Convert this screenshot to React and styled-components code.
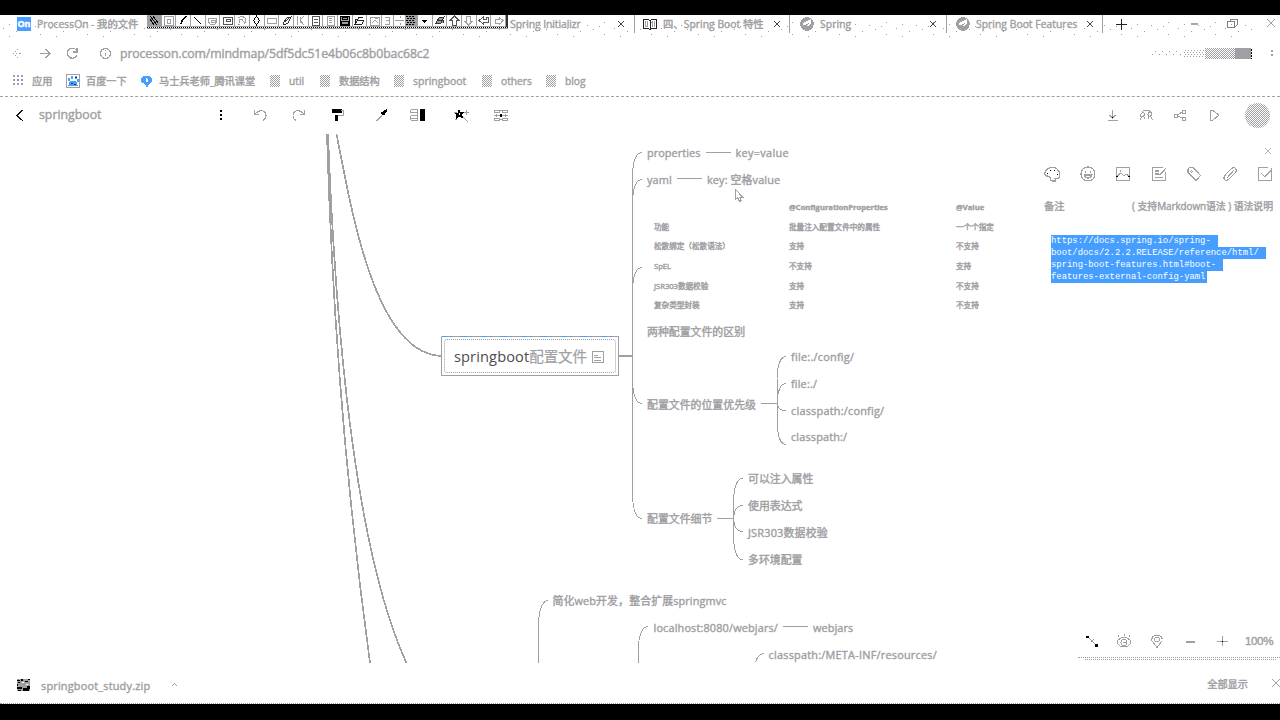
import React from 'react';
import styled, { createGlobalStyle } from 'styled-components';

const GRAY = '#a0a0a4';
const BLUE = '#469eff';
const INK = '#000';

const Global = createGlobalStyle`
  * { box-sizing: border-box; }
  body {
    margin: 0;
    width: 1280px;
    height: 720px;
    overflow: hidden;
    background: #fff;
    color: ${GRAY};
    font-family: "Open Sans", "Noto Sans CJK SC", sans-serif;
    -webkit-text-stroke: 0.4px currentColor;
  }
  svg { display: block; overflow: visible; }
`;

const Screen = styled.div`
  position: relative;
  display: flex;
  flex-direction: column;
  width: 1280px;
  height: 720px;
  overflow: hidden;
`;
const BlackBar = styled.div`
  flex: none;
  height: ${p => p.$h}px;
  background: #000;
`;

/* ---------- tab strip ---------- */
const TabStrip = styled.header`
  position: relative;
  display: flex;
  flex: none;
  height: 22px;
  padding-left: 11px;
`;
const Speckle = styled.svg`
  position: absolute;
  left: 0;
  top: 0;
  z-index: -1;
`;
const Tab = styled.div`
  display: flex;
  align-items: center;
  width: ${p => p.$w || 156}px;
  height: 18px;
  padding: 0 ${p => p.$end || 5}px 0 ${p => p.$pad || 6}px;
  border-right: 1px solid ${p => (p.$line ? GRAY : 'transparent')};
`;
const TabIcon = styled.span`
  flex: none;
  width: 14px;
  margin-right: 6px;
`;
const TabTitle = styled.span`
  flex: 1;
  overflow: hidden;
  font-size: 10.3px;
  line-height: 18px;
  letter-spacing: ${p => p.$ls || 0}px;
  white-space: pre;
`;
const WindowButtons = styled.div`
  display: flex;
  align-items: center;
  height: 16px;
  margin-left: auto;
  gap: 23px;
  padding-right: 1px;
`;
const NewTab = styled.div`
  display: flex;
  align-items: center;
  height: 18px;
  margin-left: 10px;
`;
const FloatingTools = styled.div`
  position: absolute;
  left: 147px;
  top: 0;
  display: flex;
  width: 361px;
  height: 13px;
  background: #fff;
  border-bottom: 1px dotted #000;
  border-right: 2px solid #333;
  box-shadow: 0 1px 0 ${GRAY};
`;
const ToolCell = styled.span`
  display: flex;
  flex: ${p => p.$w || 1};
  align-items: center;
  justify-content: center;
  height: 12px;
  border-right: 1px solid ${GRAY};
  border-bottom: 1px solid ${GRAY};
  background: ${p => (p.$on ? GRAY : 'transparent')};
`;

/* ---------- address + bookmarks ---------- */
const AddressBar = styled.div`
  display: flex;
  flex: none;
  align-items: center;
  height: 34px;
  padding: 0 1px 2px 10px;
`;
const Slot = styled.span`
  display: flex;
  flex: none;
  align-items: center;
  justify-content: center;
  width: 16px;
  height: 16px;
  margin-left: ${p => p.$gap || 0}px;
`;
const Url = styled.span`
  margin-left: 7px;
  font-size: 12.3px;
  letter-spacing: -0.12px;
`;
const Fade = styled.svg`
  margin-left: auto;
`;
const Bookmarks = styled.nav`
  display: flex;
  flex: none;
  align-items: center;
  height: 26px;
  padding: 0 0 5px 12px;
  border-bottom: 1px dashed ${GRAY};
`;
const Bookmark = styled.div`
  display: flex;
  align-items: center;
  width: ${p => p.$w}px;
  gap: ${p => p.$gap}px;
  font-size: ${p => p.$size || 10.2}px;
  line-height: 20px;
  white-space: nowrap;
`;
const FolderMark = styled.i`
  width: 10px;
  height: 12px;
  background: repeating-conic-gradient(${GRAY} 0 25%, #fff 0 50%) 0 0 / 2px 2px;
`;

/* ---------- editor ---------- */
const EditorBar = styled.div`
  display: flex;
  flex: none;
  align-items: center;
  height: 37px;
  padding: 0 10px 2px 12px;
`;
const DocTitle = styled.span`
  width: 101px;
  margin-left: 11px;
  font-size: 12.3px;
  line-height: 18px;
`;
const Avatar = styled.i`
  width: 25px;
  height: 25px;
  margin: 2px 0 0 23px;
  border-radius: 50%;
  background: repeating-conic-gradient(${GRAY} 0 25%, #fff 0 50%) 0 0 / 2px 2px;
`;
const BarRight = styled.div`
  display: flex;
  align-items: center;
  margin-left: auto;
`;
const Workspace = styled.main`
  display: flex;
  flex: none;
  height: 529px;
`;
const MindMap = styled.section`
  position: relative;
  width: 1040px;
  overflow: hidden;
`;
const Links = styled.svg`
  position: absolute;
  left: 0;
  top: 0;
`;
const Topic = styled.div`
  position: absolute;
  left: ${p => p.$x}px;
  top: ${p => p.$y - 134 - 8}px;
  font-size: 10.9px;
  line-height: 16px;
  letter-spacing: ${p => p.$ls}px;
  white-space: pre;
`;
const SelectedTopic = styled.div`
  position: absolute;
  left: 441px;
  top: 202px;
  width: 178px;
  height: 40px;
  padding: 2px;
  border: 1px solid ${GRAY};
  background:
    repeating-linear-gradient(90deg, ${BLUE} 0 6px, ${GRAY} 6px 9px, ${BLUE} 9px 11px, ${GRAY} 11px 20px) 0 0 / 100% 1px no-repeat border-box,
    #fff;
  border-top-color: transparent;
`;
const SelectedInner = styled.div`
  display: flex;
  align-items: center;
  height: 34px;
  padding-left: 9px;
  border: 1px dotted ${GRAY};
  border-radius: 3px;
  font-size: 14.6px;
  line-height: 20px;
  white-space: nowrap;
  -webkit-text-stroke: 0;
  b { font-weight: 400; color: #4c4c50; letter-spacing: 0.12px; }
  span { -webkit-text-stroke: 0.2px currentColor; letter-spacing: -0.2px; }
  svg { margin-left: 5px; }
`;
const CompareTable = styled.div`
  position: absolute;
  left: 654px;
  top: 63px;
  display: grid;
  grid-template-columns: 135px 167px 60px;
  grid-auto-rows: 19.7px;
  align-items: center;
  font-size: 7.6px;
  line-height: 12px;
  white-space: nowrap;
`;
const HeadCell = styled.b`
  font-size: 7.6px;
  font-weight: 700;
`;
const Pointer = styled.svg`
  position: absolute;
  left: 735px;
  top: 55px;
`;

/* ---------- side panel ---------- */
const Panel = styled.aside`
  display: flex;
  flex-direction: column;
  width: 240px;
`;
const PanelClose = styled.div`
  display: flex;
  justify-content: flex-end;
  padding: 11px 6px 0 0;
`;
const PanelTools = styled.div`
  display: flex;
  justify-content: space-between;
  padding: 9px 7px 0 4px;
`;
const NoteHead = styled.div`
  display: flex;
  justify-content: space-between;
  margin-top: 15px;
  padding: 0 7px 0 4px;
  font-size: 10.3px;
  line-height: 18px;
  white-space: nowrap;
`;
const NoteHint = styled.span`
  font-size: 9.9px;
  letter-spacing: -0.05px;
  i { font-style: normal; display: inline-block; width: 8px; text-align: center; }
`;
const NoteText = styled.div`
  display: flex;
  flex-direction: column;
  align-items: flex-start;
  margin: 20px 0 0 11px;
  color: #fff;
  font-family: "Liberation Mono", monospace;
  font-size: 8.9px;
  line-height: 12px;
`;
const NoteLine = styled.span`
  width: ${p => p.$w}px;
  height: 12px;
  background: ${BLUE};
  white-space: pre;
  -webkit-text-stroke: 0;
`;
const ZoomBar = styled.div`
  display: flex;
  align-items: center;
  height: 33px;
  margin-top: auto;
  padding-left: 44px;
`;
const ZoomValue = styled.span`
  margin-left: 15px;
  font-family: "Liberation Sans", sans-serif;
  font-size: 11.6px;
  letter-spacing: -0.4px;
`;
const ZoomEdge = styled.div`
  height: 6px;
  margin-left: 38px;
  border-top: 1px dotted ${GRAY};
  &::after {
    content: '';
    display: block;
    margin: 1px 4px 0 7px;
    border-top: 1px dotted ${GRAY};
  }
`;

/* ---------- downloads ---------- */
const Downloads = styled.footer`
  display: flex;
  flex: none;
  align-items: center;
  height: 41px;
  padding: 3px 0 0 15px;
  border-bottom: 1px dotted ${GRAY};
`;
const FileName = styled.span`
  width: 109px;
  margin: 1px 17px 0 10px;
  font-size: 10.9px;
  letter-spacing: 0.2px;
  white-space: nowrap;
`;
const ShowAll = styled.span`
  margin-left: auto;
  margin-top: -3px;
  font-size: 10.2px;
`;
const DismissSlot = styled(Slot)`
  margin: -3px -4px 0 20px;
`;

/* ---------- drawings ---------- */
const shapes = {
  close: <path d="M4 4l8 8M12 4l-8 8" />,
  smallX: <path d="M5 5l6 6M11 5l-6 6" strokeWidth="1.400" />,
  plus: <path d="M8.5 3v11M3 8.5h11" strokeWidth="1.400" />,
  plusThin: <><path d="M8.5 3v10M3 8.5h11" /><path d="M8 8h1v1H8z" fill={INK} stroke="none" /></>,
  minus: <path d="M4 8h8v1H4z" fill={GRAY} />,
  restore: <><path d="M3 5.500h7v7H3z" /><path d="M6 5V3.500h7v6l-2.500 2.500" /></>,
  backFaint: <path d="M3 8.500h1M6 8.500h1M9 8.500h2M5 6.500h1M5 10.500h1M7 4.500h1M7 12.500h1" />,
  forward: <path d="M3 8.500h10M8.500 4l4.500 4.500L8.500 13" />,
  reload: <path d="M12.500 5.500A5 5 0 1 0 13 10M13 3v4H9" strokeWidth="1.300" />,
  info: <><circle cx="8.500" cy="8.500" r="5" strokeWidth="1.300" /><path d="M8.500 7.500v3.500M8.500 5v1" strokeWidth="1.500" /></>,
  more: <path d="M7 3h2v2H7zM7 7h2v2H7zM7 11h2v2H7z" fill={INK} stroke="none" />,
  kebab: <path d="M8 5h2v2H8zM8 9h2v2H8z" fill={GRAY} stroke="none" />,
  chevronLeft: <path d="M11.500 2.500l-6.500 6 6.500 6" strokeWidth="1.200" />,
  undo: <path d="M3.500 3v4.500h4.500M4 7Q7 3.500 10.500 3.500Q14.500 4 15 8.500Q15 12 12 13.500" />,
  redo: <path d="M14.500 3v4.500H10M14 7Q11 3.500 7.500 3.500Q3.500 4 3 8.500Q3 12 6 13.500" />,
  roller: <><path d="M3 2h10v4H3z" fill={INK} stroke="none" /><path d="M12 3.500h2V8H9" stroke={GRAY} /><path d="M6 8h3v6H6z" fill={INK} stroke="none" /></>,
  pen: <><path d="M3.500 14L11 6" stroke={GRAY} strokeWidth="1.200" /><path d="M8 5h2V4l2-1 2-1v2l-2 2v2h-2L8 7z" fill={INK} stroke="none" /></>,
  style: <><path d="M2 2.500h7M1 5.500h8M2 8.500h7M1 11h8M2 13.500h7M1.500 3v3M1.500 9v4M8.500 3v10" /><path d="M11 2h5v12h-5z" fill={INK} stroke="none" /></>,
  wand: <><path d="M9 9l6 6" strokeWidth="1.200" /><path d="M6 1.500l1.500 3.500H12L9 7.500l1 4L6.500 9.500L3 12l.5-4L1 6h3.500z" fill={INK} stroke="none" /><path d="M13.500 2.500v5M11 5h5M1 5h3M2 12h2" /><path d="M6 6h1v2H6z" fill="#fff" stroke="none" /></>,
  layout: <><path d="M2 3.500h5v2H2zM10.500 3.500h5v2h-5zM2 11.500h5v2H2zM10.500 11.500h5v2h-5zM2 8.500h14M7 3.500h4M7 12.500h4M4 7v3M13 7v3" /><path d="M8 7h2v3H8z" fill={INK} stroke="none" /></>,
  download: <><path d="M8.500 3v8M5 8l3.500 3L12 8M3.500 13.500h10" strokeWidth="1.200" /><path d="M8 10h1v1H8z" fill={INK} stroke="none" /></>,
  people: <path d="M2 13l1.500-3M6 10l1 2M3 9.500Q2 7 4 6Q7 5 6.500 8Q6 10 3.500 9.500M4 5Q5 3 8 4Q11 3 13 5Q14 8 12 9.500Q9.500 9 10 7Q10.500 5 13 6M10 12l1-3M13 10l1.500 3" strokeWidth="1.200" />,
  share: <><path d="M6 7.500l5-3M6 9l5 2.500" /><rect x="2.500" y="7" width="3" height="3" /><rect x="10.500" y="3.500" width="3" height="3" /><rect x="10.500" y="10" width="3" height="3" /></>,
  play: <path d="M4.500 3v10.500h2l6.500-5.500-7-5z" />,
  palette: <><path d="M2 10Q-1 7 3 3.500Q8-1 13 3Q18 8 14.500 12.500H11L11.500 15H8.500Q6 15 6.500 12Q5.500 9.500 2 10z" strokeWidth="1.200" /><path d="M3 7.500h1M6 4.500h1M10 4.500h1M13 8.500h1" stroke={INK} /></>,
  smile: <><circle cx="8" cy="8" r="7" strokeWidth="1.200" /><path d="M5 6h1M10 6h1M4 9h8Q11 12 8 12Q5 12 4 9" strokeWidth="1.200" /></>,
  image: <><path d="M1.500 1.500h13v13h-13zM2 10l4-3 3 3 2-2 3 2M5 5h1" strokeWidth="1.200" /><path d="M1 10h2M13 10h2" stroke={INK} /></>,
  note: <path d="M12 1.500H1.500v13h13V6M4 5h4M4 8h4M4 11.500h8M7 8l2 1 6-7" strokeWidth="1.200" />,
  tag: <><path d="M2 3l1.500-1.500H7l7.500 8-4.500 5L2 6.500z" strokeWidth="1.200" /><circle cx="5.500" cy="5.500" r=".7" /></>,
  clip: <path d="M6 10l6-6M2 10l7-7Q12 0 14 3Q15 5 13 7l-6 6Q4 16 2 13Q1 11 4 9M5 12l6-6" strokeWidth="1.200" />,
  task: <path d="M11 1.500H1.500v13h13V2M4 7l4 4 7-8" strokeWidth="1.300" />,
  fit: <><path d="M4 4l9 9M7 9l3-3" /><path d="M2 3h3v2H2zM11 11h3v3h-3z" fill={INK} stroke="none" /></>,
  eye: <><path d="M1 9Q3 4.500 8 4.500Q13 4.500 15 9Q13 14 8 14Q3 14 1 9z" /><circle cx="8" cy="9.500" r="3" /><path d="M2 2l1 2M8 1v2M14 2l-1 2M7 9h3" /></>,
  pin: <><path d="M8 14.500L3 8Q2 2.500 8 2.500Q14 2.500 13 8z" /><circle cx="8" cy="6.500" r="2.500" /></>,
  up: <path d="M4.500 9.500l3-3 3 3" strokeWidth="1.200" />,
};

function Glyph({ name, size = 16, color = GRAY }) {
  return (
    <svg width={size} height={size} viewBox="0 0 16 16" fill="none" stroke={color} shapeRendering="crispEdges">
      {shapes[name]}
    </svg>
  );
}

const Leaf = () => (
  <svg width="14" height="14" viewBox="0 0 14 14" shapeRendering="crispEdges">
    <circle cx="7" cy="7" r="6.800" fill={GRAY} />
    <path d="M3 6q4-2 8-4q1 4-1 6q-2 2-6 1q4 0 5-3q-3 2-6 2z" fill="#fff" />
  </svg>
);
const Book = () => (
  <svg width="14" height="12" viewBox="0 0 14 12" fill="none" stroke="#222" shapeRendering="crispEdges">
    <path d="M.5 1.500h5l1.500 1 1.500-1h5v9H8.500L7 11.500 5.500 10.500h-5zM7 2v9" />
    <path d="M2.500 3v6M4.500 3v6M9.500 3v6M11.500 3v6" stroke={GRAY} />
  </svg>
);
const OnBadge = styled.span`
  display: block;
  width: 14px;
  height: 14px;
  background: ${BLUE};
  color: #fff;
  font-size: 9px;
  font-weight: 700;
  line-height: 14px;
  text-align: center;
`;
const AppsMark = () => (
  <svg width="12" height="12" fill={GRAY} shapeRendering="crispEdges">
    {[0, 4, 8].map(y => [0, 4, 8].map(x => (
      <rect key={`${x}${y}`} x={x + 1} y={y} width="2" height="2" fill={x === 4 && y === 4 ? BLUE : GRAY} />
    )))}
  </svg>
);
const PawMark = () => (
  <svg width="14" height="14" fill="none" stroke={GRAY} shapeRendering="crispEdges">
    <rect x=".5" y=".5" width="13" height="13" />
    <path d="M4 7h6l2 5H2zM2 4h2v3H2zM5 2h2v3H5zM9 2h2v3H9zM11 5h2v3h-2z" fill={BLUE} stroke="none" />
    <path d="M5 9h2M8 10h2M9 3h2" stroke="#333" />
  </svg>
);
const DropMark = () => (
  <svg width="12" height="13" shapeRendering="crispEdges">
    <path d="M2 1h7l2 3v3L8 9l-2 4-2-4-4-2V4z" fill={BLUE} />
    <path d="M5.500 3v3h1V4" stroke="#fff" fill="none" />
  </svg>
);
const ArchiveMark = () => (
  <svg width="16" height="14" shapeRendering="crispEdges">
    <path d="M2 1h13v12H2z" fill={GRAY} />
    <path d="M2 2h3v1H2zM6 1h2v2H6zM10 3h3v1h-3zM3 4h2v1H3zM13 1h2v1h-2zM2 6h1v2H2zM2 9h5v2H2zM8 10h6v3H8zM3 12h3v1H3zM12 8h3v3h-3z" fill="#000" />
    <path d="M7 4h2v1H7zM11 6h2v1h-2z" fill="#fff" />
  </svg>
);

const toolCells = [
  { on: true, d: 'M2 1l7 9M5 1l5 7M2 4l4 6', k: INK },
  { d: 'M1 1h9v9H1zM4 4h3v4H4z' },
  { d: 'M3 9l1-3 4-5', k: INK, w: 1.5 },
  { d: 'M2 2l7 7', k: INK },
  { d: 'M2 3h7l1 3-2 3H3L1 6zM4 5h4v2H4z' },
  { d: 'M1 2h9v7H1zM4 4h4v2H4z', k: '#555' },
  { d: 'M2 3q4-3 7 0v5M3 8V5l3-1 3 5M2 9h2' },
  { d: 'M5.500 1l3 4.500-3 4.500-3-4.500z', k: INK },
  { d: 'M1 3h9v5H1z' },
  { d: 'M2 8l4-5 4-1-3 6-4 2zM4 7l4-4', k: '#333' },
  { d: 'M2 1v9M9 1L5 5l4 5M5 2v6' },
  { d: 'M2 1h7v9H2zM4 4h4M4 7h4', k: '#555' },
  { d: 'M2 1h7v9H2zM4 3h3M4 5h3M4 7h3' },
  { d: 'M1 1h9v9H1zM3 2h5v2H3zM2 6h7v3H2z', k: INK, f: GRAY },
  { d: 'M1 9V4h3l1-2h4M1 9l3-4h6L8 9z', k: '#222' },
  { d: 'M1 2h9v8H1zM3 8l3-3 3 3M6 3h3' },
  { d: 'M3 2h4v7H3M4 5h3', wide: 0.8 },
  { d: 'M1 5.500h9M6 1v2M6 8v2', wide: 0.8 },
  { on: true, d: 'M0 1h2m1 0h2m1 0h2M1 3h2m1 0h2m1 0h2M0 5h2m1 0h2m1 0h2M1 7h2m1 0h2m1 0h2M0 9h2m1 0h2m1 0h2', k: INK, wide: 0.8 },
  { d: 'M3 5h5M4 6h3M5 7h1', k: INK },
  { d: 'M2 8l3-5 5-1-3 6zM3 5h6v3', k: '#333', f: GRAY },
  { d: 'M5.500 1L1.500 5h2v5h4V5h2z', k: '#555' },
  { d: 'M5.500 10L1.500 6h2V1h4v5h2z' },
  { d: 'M1 5.500L5 2v2h3V2h2v5H5v2z', k: '#555' },
  { d: 'M10 5.500L6 2v2H2v4h4v2z' },
];

const topics = [
  [647, 153, 'properties', 0.06], [735.5, 153, 'key=value', 0.33],
  [647, 180, 'yaml', 0.1], [707, 180, 'key: 空格value', 0.12],
  [647, 331.5, '两种配置文件的区别'],
  [647, 405, '配置文件的位置优先级'],
  [791, 357, 'file:./config/', 0.25], [791, 384, 'file:./', 0.15],
  [791, 411, 'classpath:/config/', 0.22], [791, 437, 'classpath:/', 0.15],
  [647, 519, '配置文件细节'],
  [748, 479, '可以注入属性'], [748, 506, '使用表达式'],
  [748, 533, 'JSR303数据校验', 0.2], [748, 560, '多环境配置'],
  [552.5, 601, '简化web开发，整合扩展springmvc', 0.12],
  [653.5, 628, 'localhost:8080/webjars/', 0.15], [813, 628, 'webjars', 0.1],
  [768.5, 655, 'classpath:/META-INF/resources/', 0.23],
];

const rows = [
  ['功能', '批量注入配置文件中的属性', '一个个指定'],
  ['松散绑定（松散语法）', '支持', '不支持'],
  ['SpEL', '不支持', '支持'],
  ['JSR303数据校验', '支持', '不支持'],
  ['复杂类型封装', '支持', '不支持'],
];

const noteLines = [
  [167, 'https://docs.spring.io/spring-'],
  [215, 'boot/docs/2.2.2.RELEASE/reference/html/'],
  [172, 'spring-boot-features.html#boot-'],
  [156, 'features-external-config-yaml'],
];

const branch = (x, y, tx, ty) => {
  const r = Math.min(22, Math.abs(ty - y));
  const s = ty < y ? 1 : -1;
  return `M${x} ${y}V${ty + s * r}Q${x + 1} ${ty} ${tx} ${ty}`;
};

export default function App() {
  return (
    <Screen>
      <Global />
      <BlackBar $h={15} />
      <TabStrip>
        <Speckle width="1280" height="22" fill={GRAY} shapeRendering="crispEdges">
          <defs>
            <pattern id="dots" width="47" height="12" patternUnits="userSpaceOnUse">
              <path d="M3 1h1v1h-1zM16 4h1v1h-1zM29 2h1v1h-1zM40 7h1v1h-1zM9 9h1v1h-1zM23 10h1v1h-1zM35 11h1v1h-1z" />
            </pattern>
          </defs>
          <rect x="2" y="5" width="1250" height="17" fill="url(#dots)" />
        </Speckle>
        <Tab><TabIcon><OnBadge>On</OnBadge></TabIcon><TabTitle>ProcessOn - 我的文件</TabTitle></Tab>
        <Tab />
        <Tab />
        <Tab $line>
          <TabIcon /><TabTitle $ls={-0.05}>{'  Spring Initializr'}</TabTitle><Glyph name="smallX" color="#444" />
        </Tab>
        <Tab $line $w={155} $pad={8} $end={4}>
          <TabIcon><Book /></TabIcon><TabTitle $ls={0.05}>四、Spring Boot 特性</TabTitle><Glyph name="smallX" color="#444" />
        </Tab>
        <Tab $line $w={157} $pad={10}>
          <TabIcon><Leaf /></TabIcon><TabTitle $ls={0.1}>Spring</TabTitle><Glyph name="smallX" color="#444" />
        </Tab>
        <Tab $line $pad={9} $end={4}>
          <TabIcon><Leaf /></TabIcon><TabTitle $ls={0.05}>Spring Boot Features</TabTitle><Glyph name="smallX" color="#444" />
        </Tab>
        <NewTab><Glyph name="plus" color="#222" /></NewTab>
        <WindowButtons>
          <Glyph name="minus" size={15} /><Glyph name="restore" size={15} color="#77777b" /><Glyph name="close" size={16} />
        </WindowButtons>
        <FloatingTools>
          {toolCells.map((c, i) => (
            <ToolCell key={i} $on={c.on} $w={c.wide}>
              <svg width="11" height="11" fill={c.f || 'none'} stroke={c.k || GRAY} strokeWidth={c.w || 1} shapeRendering="crispEdges">
                <path d={c.d} />
              </svg>
            </ToolCell>
          ))}
        </FloatingTools>
      </TabStrip>

      <AddressBar>
        <Slot><Glyph name="backFaint" /></Slot>
        <Slot $gap={11}><Glyph name="forward" /></Slot>
        <Slot $gap={11}><Glyph name="reload" /></Slot>
        <Slot $gap={17}><Glyph name="info" /></Slot>
        <Url>processon.com/mindmap/5df5dc51e4b06c8b0bac68c2</Url>
        <Fade width="101" height="11" shapeRendering="crispEdges">
          <defs>
            <pattern id="sparse" width="7" height="5" patternUnits="userSpaceOnUse"><path d="M1 1h1v1h-1zM4 3h1v1h-1z" fill={GRAY} /></pattern>
            <pattern id="mid" width="3" height="4" patternUnits="userSpaceOnUse"><path d="M0 0h1v1h-1zM1 2h1v1h-1z" fill={GRAY} /></pattern>
            <pattern id="dense" width="2" height="2" patternUnits="userSpaceOnUse"><path d="M0 0h1v1h-1zM1 1h1v1h-1z" fill={GRAY} /></pattern>
          </defs>
          <rect x="0" y="2" width="32" height="6" fill="url(#sparse)" />
          <rect x="32" y="1" width="22" height="9" fill="url(#mid)" />
          <rect x="54" y="0" width="30" height="11" fill="url(#dense)" />
          <rect x="84" y="0" width="16" height="11" fill={GRAY} />
          <path d="M100.500 1v10" stroke="#000" strokeDasharray="2 1" />
        </Fade>
        <Slot $gap={11}><Glyph name="kebab" /></Slot>
      </AddressBar>

      <Bookmarks>
        <Bookmark $w={54} $gap={8}><AppsMark />应用</Bookmark>
        <Bookmark $w={75} $gap={6}><PawMark />百度一下</Bookmark>
        <Bookmark $w={129} $gap={6}><DropMark />马士兵老师_腾讯课堂</Bookmark>
        <Bookmark $w={50} $gap={9}><FolderMark />util</Bookmark>
        <Bookmark $w={74} $gap={9}><FolderMark />数据结构</Bookmark>
        <Bookmark $w={88} $gap={9} $size={10.5}><FolderMark />springboot</Bookmark>
        <Bookmark $w={64} $gap={9}><FolderMark />others</Bookmark>
        <Bookmark $w={60} $gap={9}><FolderMark />blog</Bookmark>
      </Bookmarks>

      <EditorBar>
        <Slot><Glyph name="chevronLeft" color="#111" /></Slot>
        <DocTitle>springboot</DocTitle>
        <Slot $gap={73}><Glyph name="more" /></Slot>
        <Slot $gap={22}><Glyph name="undo" /></Slot>
        <Slot $gap={23}><Glyph name="redo" /></Slot>
        <Slot $gap={23}><Glyph name="roller" /></Slot>
        <Slot $gap={28}><Glyph name="pen" /></Slot>
        <Slot $gap={20}><Glyph name="style" /></Slot>
        <Slot $gap={28}><Glyph name="wand" /></Slot>
        <Slot $gap={23}><Glyph name="layout" /></Slot>
        <BarRight>
          <Slot><Glyph name="download" /></Slot>
          <Slot $gap={18}><Glyph name="people" /></Slot>
          <Slot $gap={18}><Glyph name="share" /></Slot>
          <Slot $gap={18}><Glyph name="play" /></Slot>
          <Avatar />
        </BarRight>
      </EditorBar>

      <Workspace>
        <MindMap>
          <Links width="1040" height="529" viewBox="0 134 1040 529" fill="none" stroke={GRAY} shapeRendering="crispEdges">
            <g strokeWidth="1.700">
              <path d="M336.500 134C350 200 373 356 443 356" />
              <path d="M327 134C332 310 345 480 370 663" />
              <path d="M328 134C334 290 350 540 406.500 663" />
              <path d="M619 356h13" strokeWidth="2" />
            </g>
            {[152.5, 179.5, 267.5, 403.5, 518.5].map(y => <path key={y} d={branch(632.5, 356, 642, y)} />)}
            {[356.5, 383.5, 410.5, 444.5].map(y => <path key={y} d={branch(777, 403.5, 786, y)} />)}
            {[478.5, 505.5, 531.5, 559.5].map(y => <path key={y} d={branch(733.5, 518.5, 742.5, y)} />)}
            <path d="M706 152.500h25M677 178.500h25M761 403.500h16M717 518.500h16M783 626.500h25" />
            <path d="M538.500 663V622Q540 601 548 600.500M638.500 663V645Q640 627 648 626.500M755.500 662Q758 654 764 653.500" />
          </Links>
          {topics.map(([x, y, t, ls]) => <Topic key={t} $x={x} $y={y} $ls={ls || 0}>{t}</Topic>)}
          <CompareTable>
            <span /><HeadCell>@ConfigurationProperties</HeadCell><HeadCell>@Value</HeadCell>
            {rows.flatMap((r, i) => r.map((c, j) => <span key={`${i}-${j}`}>{c}</span>))}
          </CompareTable>
          <SelectedTopic>
            <SelectedInner>
              <b>springboot</b><span>配置文件</span>
              <svg width="12" height="13" fill="none" stroke={GRAY} shapeRendering="crispEdges">
                <path d="M.5 1.500h11v11H.5zM2 5h4M2 7.500h7M2 10h7" />
              </svg>
            </SelectedInner>
          </SelectedTopic>
          <Pointer width="9" height="13" fill="#fff" stroke={GRAY} shapeRendering="crispEdges">
            <path d="M.5 .5v10l2-2 2 4 2-1-2-3.500h3z" />
          </Pointer>
        </MindMap>

        <Panel>
          <PanelClose><Glyph name="close" size={12} /></PanelClose>
          <PanelTools>
            {['palette', 'smile', 'image', 'note', 'tag', 'clip', 'task'].map(n => <Glyph key={n} name={n} />)}
          </PanelTools>
          <NoteHead><span>备注</span><NoteHint><i>(</i>支持Markdown语法<i>)</i>语法说明</NoteHint></NoteHead>
          <NoteText>
            {noteLines.map(([w, t]) => <NoteLine key={t} $w={w}>{t}</NoteLine>)}
          </NoteText>
          <ZoomBar>
            <Slot><Glyph name="fit" /></Slot>
            <Slot $gap={16}><Glyph name="eye" /></Slot>
            <Slot $gap={17}><Glyph name="pin" /></Slot>
            <Slot $gap={17}><Glyph name="minus" /></Slot>
            <Slot $gap={16}><Glyph name="plusThin" /></Slot>
            <ZoomValue>100%</ZoomValue>
          </ZoomBar>
          <ZoomEdge />
        </Panel>
      </Workspace>

      <Downloads>
        <ArchiveMark />
        <FileName>springboot_study.zip</FileName>
        <Glyph name="up" />
        <ShowAll>全部显示</ShowAll>
        <DismissSlot><Glyph name="close" /></DismissSlot>
      </Downloads>
      <BlackBar $h={16} />
    </Screen>
  );
}
